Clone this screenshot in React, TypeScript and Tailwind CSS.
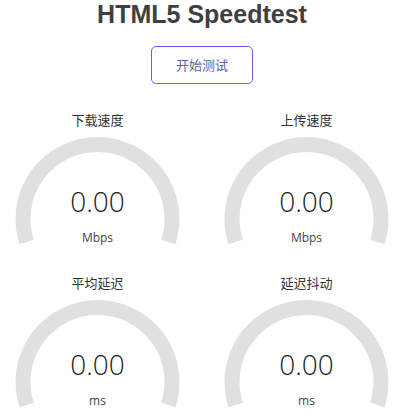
import React from 'react';

type Gauge = { label: string; value: string; unit: string };

const GAUGES: Gauge[] = [
  { label: '下载速度', value: '0.00', unit: 'Mbps' },
  { label: '上传速度', value: '0.00', unit: 'Mbps' },
  { label: '平均延迟', value: '0.00', unit: 'ms' },
  { label: '延迟抖动', value: '0.00', unit: 'ms' },
];

// arc from -1.1π to 0.1π, like the canvas meter
const arcPath = (cx: number, cy: number, r: number) => {
  const a0 = -Math.PI * 1.1;
  const a1 = Math.PI * 0.1;
  const x0 = cx + r * Math.cos(a0);
  const y0 = cy + r * Math.sin(a0);
  const x1 = cx + r * Math.cos(a1);
  const y1 = cy + r * Math.sin(a1);
  return `M ${x0} ${y0} A ${r} ${r} 0 1 1 ${x1} ${y1}`;
};

const Meter: React.FC<{ gauge: Gauge }> = ({ gauge }) => (
  <div className="flex w-[209px] flex-col items-center">
    <div className="h-[20px] text-[13px] leading-[20px] text-[#333]">{gauge.label}</div>
    <div className="relative h-[143px] w-[209px]">
      <svg width="209" height="143" viewBox="0 0 209 143">
        <path d={arcPath(104.5, 89, 74.5)} fill="none" stroke="#e0e0e0" strokeWidth="15" />
      </svg>
      <div
        className="absolute left-0 right-0 top-[52px] text-center text-[28px] font-light leading-[38px] text-[#222]"
        style={{ fontFamily: '"Open Sans", sans-serif' }}
      >
        {gauge.value}
      </div>
      <div
        className="absolute left-0 right-0 top-[100px] text-center text-[12px] leading-[16px] text-[#444]"
        style={{ fontFamily: '"Open Sans", sans-serif' }}
      >
        {gauge.unit}
      </div>
    </div>
  </div>
);

export default function App() {
  return (
    <div
      className="box-border h-[420px] w-[396px] overflow-hidden bg-white pl-[8px]"
      style={{ fontFamily: '"Noto Sans CJK SC", sans-serif' }}
    >
      <h1
        className="h-[28px] text-center text-[25px] font-bold leading-[28px] text-[#404040]"
        style={{ fontFamily: '"Liberation Sans", sans-serif' }}
      >
        HTML5 Speedtest
      </h1>
      <div className="mt-[18px] flex justify-center">
        <button className="h-[38px] w-[102px] rounded-[5px] border-[1.5px] border-[#6060ff] text-[13px] text-[#6060aa]">
          开始测试
        </button>
      </div>
      <div className="ml-[-15px] mt-[26px] flex w-[418px] flex-wrap">
        {GAUGES.map(g => (
          <Meter key={g.label} gauge={g} />
        ))}
      </div>
    </div>
  );
}
